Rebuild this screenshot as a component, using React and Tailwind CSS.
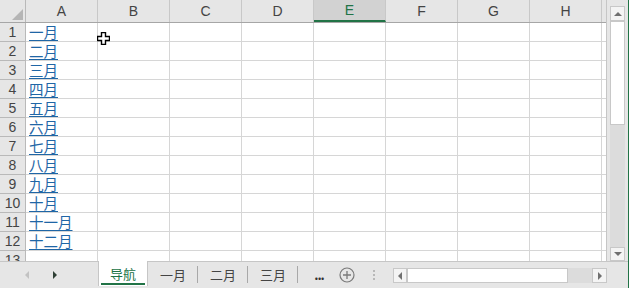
import React from 'react';

const cols = ['A', 'B', 'C', 'D', 'E', 'F', 'G', 'H'];
const months = ['一月', '二月', '三月', '四月', '五月', '六月', '七月', '八月', '九月', '十月', '十一月', '十二月'];

// 表头单元格
const HeaderCell = ({ label, active }) => (
  <div
    className={`box-border h-full w-[72px] shrink-0 border-r border-[#c8c8c8] flex items-center justify-center text-[14px] ${
      active ? 'bg-[#d2d2d2] text-[#217346] border-b-2 border-b-[#217346]' : 'text-[#444]'
    }`}
  >
    {label}
  </div>
);

const Row = ({ n, text, partial }) => (
  <div className={`flex shrink-0 ${partial ? 'h-[11px] overflow-hidden' : 'h-[19px]'}`}>
    <div className="box-border w-[26px] h-[19px] shrink-0 bg-[#e6e6e6] border-r border-b border-[#b9b9b9] flex items-center justify-center text-[14px] text-[#444]">
      {n}
    </div>
    <div className="box-border w-[72px] h-[19px] shrink-0 border-r border-b border-[#d6d6d6] flex items-end pl-[3px] pb-[1px] overflow-visible">
      {text && (
        <span className="text-[14.5px] leading-[17px] text-[#1f66a6] underline decoration-[#1f66a6] underline-offset-[2px] whitespace-nowrap" style={{ fontFamily: '"Noto Sans CJK SC", sans-serif' }}>
          {text}
        </span>
      )}
    </div>
    {cols.slice(1).map((c) => (
      <div key={c} className="box-border w-[72px] h-[19px] shrink-0 border-r border-b border-[#d6d6d6]" />
    ))}
    <div className="box-border w-[4px] h-[19px] shrink-0 border-b border-[#d6d6d6]" />
  </div>
);

const Tri = ({ dir, color, className }) => (
  <svg width="6" height="8" viewBox="0 0 6 8" className={className}>
    {dir === 'left' ? <path d="M5 0 L5 8 L1 4 Z" fill={color} /> : <path d="M1 0 L1 8 L5 4 Z" fill={color} />}
  </svg>
);

const VTri = ({ dir }) => (
  <svg width="8" height="5" viewBox="0 0 8 5">
    {dir === 'up' ? <path d="M0 5 L8 5 L4 1 Z" fill="#707070" /> : <path d="M0 0 L8 0 L4 4 Z" fill="#707070" />}
  </svg>
);

const Tab = ({ label, active, sep = true }) =>
  active ? (
    <div className="relative w-[50px] h-[25px] -mt-px bg-white border-x border-[#c6c6c6] flex items-center justify-center text-[13px] text-[#217346]">
      {label}
      <div className="absolute left-[2px] right-[2px] bottom-[1px] h-[2px] bg-[#217346]" />
    </div>
  ) : (
    <div className="relative w-[50px] h-[26px] flex items-center justify-center text-[13px] text-[#444]">
      {label}
      {sep && <div className="absolute right-0 top-[4px] h-[17px] w-px bg-[#a8a8a8]" />}
    </div>
  );

export default function App() {
  return (
    <div
      className="w-[629px] h-[288px] flex bg-[#e6e6e6] overflow-hidden select-none"
      style={{ fontFamily: '"Liberation Sans", "Noto Sans CJK SC", sans-serif' }}
    >
      <div className="w-[628px] h-full flex flex-col">
        <div className="h-[262px] flex border-b border-[#c6c6c6] box-border">
          {/* 表格区域 */}
          <div className="relative w-[607px] h-full bg-white border-r border-[#c6c6c6] box-border flex flex-col overflow-hidden">
            <div className="flex h-[23px] shrink-0 bg-[#e6e6e6] border-b border-[#a6a6a6] box-border">
              <div className="box-border w-[26px] h-full shrink-0 border-r border-[#b9b9b9] flex items-end justify-end pr-[2px] pb-[2px]">
                <svg width="11" height="11" viewBox="0 0 11 11">
                  <path d="M11 0 L11 11 L0 11 Z" fill="#b5b5b5" />
                </svg>
              </div>
              {cols.map((c) => (
                <HeaderCell key={c} label={c} active={c === 'E'} />
              ))}
              <div className="w-[4px]" />
            </div>
            {months.map((m, i) => (
              <Row key={m} n={i + 1} text={m} />
            ))}
            <Row n={13} partial />
            {/* 鼠标指针 */}
            <svg width="13" height="13" viewBox="0 0 13 13" className="absolute left-[97px] top-[32px]">
              <path
                d="M4.5 0.5 H8.5 V4.5 H12.5 V8.5 H8.5 V12.5 H4.5 V8.5 H0.5 V4.5 H4.5 Z"
                fill="white"
                stroke="black"
                strokeWidth="1.4"
              />
            </svg>
          </div>
          {/* 垂直滚动条 */}
          <div className="w-[21px] h-full flex">
            <div className="ml-[3px] w-[15px] h-full pt-[6px] flex flex-col">
              <div className="h-[15px] bg-[#f4f4f4] border border-[#c8c8c8] box-border flex items-center justify-center">
                <VTri dir="up" />
              </div>
              <div className="h-[104px] bg-white border border-[#c8c8c8] box-border" />
              <div className="flex-1 bg-[#dcdcdc]" />
              <div className="h-[14px] bg-[#f4f4f4] border border-[#c8c8c8] box-border flex items-center justify-center">
                <VTri dir="down" />
              </div>
            </div>
          </div>
        </div>
        {/* 工作表标签栏 */}
        <div className="h-[26px] flex items-start" style={{ fontFamily: '"Noto Sans CJK SC", sans-serif' }}>
          <div className="w-[98px] h-[26px] flex items-center">
            <Tri dir="left" color="#c2c2c2" className="ml-[24px]" />
            <Tri dir="right" color="#2f3f35" className="ml-[22px]" />
          </div>
          <Tab label="导航" active />
          <Tab label="一月" />
          <Tab label="二月" />
          <Tab label="三月" />
          <div className="w-[41px] h-[26px] flex items-center justify-center text-[13px] text-[#333] font-bold tracking-[-1px] pl-[1px]">
            ...
          </div>
          <div className="w-[16px] h-[26px] flex items-center justify-center">
            <svg width="16" height="16" viewBox="0 0 16 16">
              <circle cx="8" cy="8" r="7" fill="none" stroke="#7a7a7a" strokeWidth="1.2" />
              <path d="M8 4 V12 M4 8 H12" stroke="#7a7a7a" strokeWidth="1.3" />
            </svg>
          </div>
          <div className="w-[38px] h-[26px] flex flex-col items-center justify-center gap-[2px]">
            <div className="w-[2px] h-[2px] bg-[#b8b8b8]" />
            <div className="w-[2px] h-[2px] bg-[#b8b8b8]" />
            <div className="w-[2px] h-[2px] bg-[#b8b8b8]" />
          </div>
          {/* 水平滚动条 */}
          <div className="w-[214px] h-[15px] mt-[6px] flex">
            <div className="w-[14px] h-full bg-[#f4f4f4] border border-[#c8c8c8] box-border flex items-center justify-center">
              <Tri dir="left" color="#707070" />
            </div>
            <div className="w-[161px] h-full bg-white border border-[#c8c8c8] box-border" />
            <div className="flex-1 bg-[#dcdcdc]" />
            <div className="w-[15px] h-full bg-[#f4f4f4] border border-[#c8c8c8] box-border flex items-center justify-center">
              <Tri dir="right" color="#707070" />
            </div>
          </div>
        </div>
      </div>
      <div className="w-px h-full bg-[#217346]" />
    </div>
  );
}
